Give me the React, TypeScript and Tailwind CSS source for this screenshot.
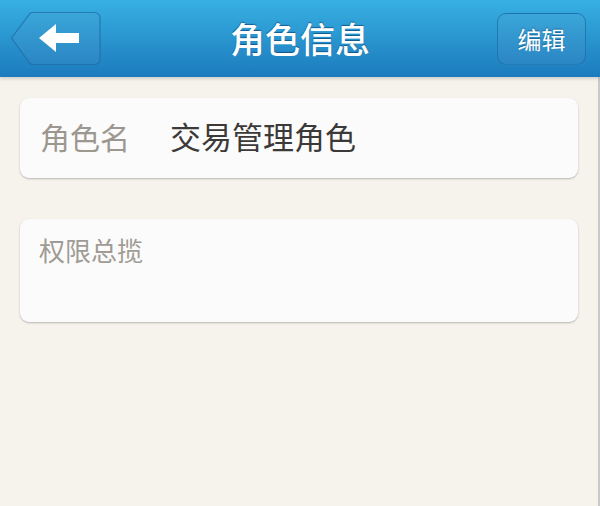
import React from "react";

const FONT = { fontFamily: '"Noto Sans CJK SC", "Noto Sans", sans-serif' };

const BackButton: React.FC = () => (
  <button className="relative h-[55px] w-[92px]" aria-label="返回">
    <svg width="92" height="55" viewBox="0 0 92 55" className="absolute inset-0">
      <defs>
        <linearGradient id="backBg" x1="0" y1="0" x2="0" y2="1">
          <stop offset="0" stopColor="#3aa6d9" />
          <stop offset="1" stopColor="#2b86c3" />
        </linearGradient>
      </defs>
      <path
        d="M1.5 27 L20 2.5 Q21 1.5 23 1.5 L84 1.5 Q90 1.5 90 7.5 L90 47.5 Q90 53.5 84 53.5 L23 53.5 Q21 53.5 20 52.5 Z"
        fill="url(#backBg)"
        stroke="#1f6ea7"
        strokeOpacity="0.8"
        strokeWidth="1.2"
      />
      <path d="M29 27 L46 13 L46 22 L69 22 L69 32 L46 32 L46 41 Z" fill="#ffffff" />
    </svg>
  </button>
);

export default function App() {
  return (
    <div className="flex h-[506px] w-[600px] flex-col bg-[#f6f3ed]" style={FONT}>
      <header className="relative flex h-[77px] shrink-0 items-center justify-between bg-gradient-to-b from-[#38b0e2] to-[#1c7bbd] pl-[10px] pr-[14px] shadow-[0_2px_3px_rgba(0,0,0,0.15)]">
        <BackButton />
        <h1 className="absolute left-1/2 top-[17px] -translate-x-1/2 text-[35px] font-medium leading-[42px] text-white [text-shadow:0_-1px_1px_rgba(0,50,100,0.6)]">
          角色信息
        </h1>
        <button className="flex h-[52px] w-[89px] items-center justify-center rounded-[9px] border border-[#1c6aa3]/70 bg-gradient-to-b from-[#3aa6d9] to-[#2b86c3] text-[24px] text-white [text-shadow:0_-1px_1px_rgba(0,50,100,0.5)]">
          编辑
        </button>
      </header>

      <main className="flex flex-1 flex-col gap-[41px] border-r-2 border-[#c9c9c9] px-[20px] pt-[21px]">
        <div className="flex h-[80px] items-center rounded-[9px] bg-[#fbfbfb] pb-[4px] pl-[20px] shadow-[0_1px_2px_rgba(0,0,0,0.25)]">
          <span className="w-[130px] text-[30px] text-[#9c978f]">角色名</span>
          <span className="text-[31px] text-[#3b3a38]">交易管理角色</span>
        </div>

        <div className="h-[103px] rounded-[9px] bg-[#fbfbfb] pl-[19px] pt-[13px] shadow-[0_1px_2px_rgba(0,0,0,0.25)]">
          <span className="text-[26px] leading-[36px] text-[#a09b94]">权限总揽</span>
        </div>
      </main>
    </div>
  );
}
